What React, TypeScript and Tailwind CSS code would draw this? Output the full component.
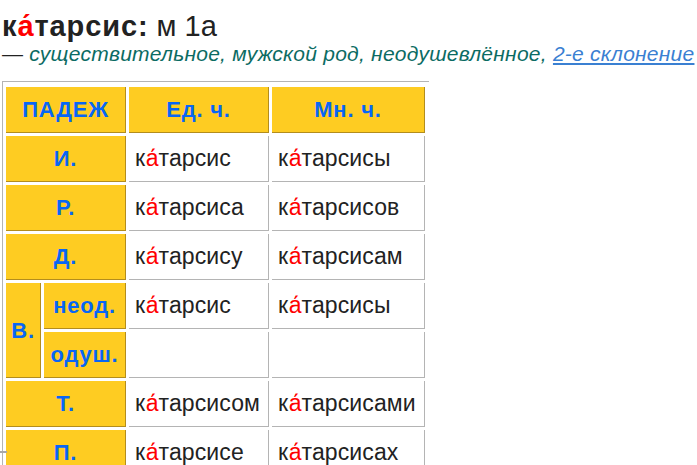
import React from "react";

const Word = ({ suffix }: { suffix: string }) => (
  <span>
    к<span className="text-[#ff0000]">а&#x301;</span>тарсис{suffix}
  </span>
);

const Y = ({ children, className = "" }: { children?: React.ReactNode; className?: string }) => (
  <div
    className={`bg-[#fecc22] border-r border-b border-[#b38d1d] flex items-center justify-center font-bold text-[#0866f5] text-[22px] tracking-[0.8px] ${className}`}
  >
    {children}
  </div>
);

const W = ({ children }: { children?: React.ReactNode }) => (
  <div className="bg-white border-r border-b border-[#b4b4b4] flex items-center pl-[6px] text-[#222] text-[23px] tracking-[0.1px] whitespace-nowrap">
    {children}
  </div>
);

export default function App() {
  return (
    <div
      className="relative pl-[2px] bg-white min-h-[465px]"
      style={{ fontFamily: '"Liberation Sans", Arial, sans-serif' }}
    >
      <div className="pt-[10px] text-[29px] leading-[32px] text-[#222]">
        <span className="font-bold tracking-[0.9px]">
          к<span className="text-[#ff0000]">а&#x301;</span>тарсис:
        </span>{" "}
        м 1а
      </div>
      <div className="text-[21px] leading-[24px] tracking-[0.25px] whitespace-nowrap">
        <span className="text-[#222]">— </span>
        <span className="italic text-[#0b6b63]">
          существительное, мужской род, неодушевлённое,{" "}
          <span className="text-[#3a80d2] underline">2-е склонение</span>
        </span>
      </div>
      <div className="mt-[15px] w-[427px] border-l border-t border-[#b4b4b4] pl-[3px] pt-[5px]">
        <div className="grid grid-cols-[35px_82px_140px_153px] auto-rows-[46px] gap-[3px]">
          <Y className="col-span-2">ПАДЕЖ</Y>
          <Y>Ед. ч.</Y>
          <Y>Мн. ч.</Y>

          <Y className="col-span-2">И.</Y>
          <W><Word suffix="" /></W>
          <W><Word suffix="ы" /></W>

          <Y className="col-span-2">Р.</Y>
          <W><Word suffix="а" /></W>
          <W><Word suffix="ов" /></W>

          <Y className="col-span-2">Д.</Y>
          <W><Word suffix="у" /></W>
          <W><Word suffix="ам" /></W>

          <Y className="row-span-2">В.</Y>
          <Y>неод.</Y>
          <W><Word suffix="" /></W>
          <W><Word suffix="ы" /></W>
          <Y>одуш.</Y>
          <W />
          <W />

          <Y className="col-span-2">Т.</Y>
          <W><Word suffix="ом" /></W>
          <W><Word suffix="ами" /></W>

          <Y className="col-span-2">П.</Y>
          <W><Word suffix="е" /></W>
          <W><Word suffix="ах" /></W>
        </div>
      </div>
      <div className="absolute left-0 top-[451px] w-[7px] h-[2px] bg-[#a8a8a8]" />
    </div>
  );
}
